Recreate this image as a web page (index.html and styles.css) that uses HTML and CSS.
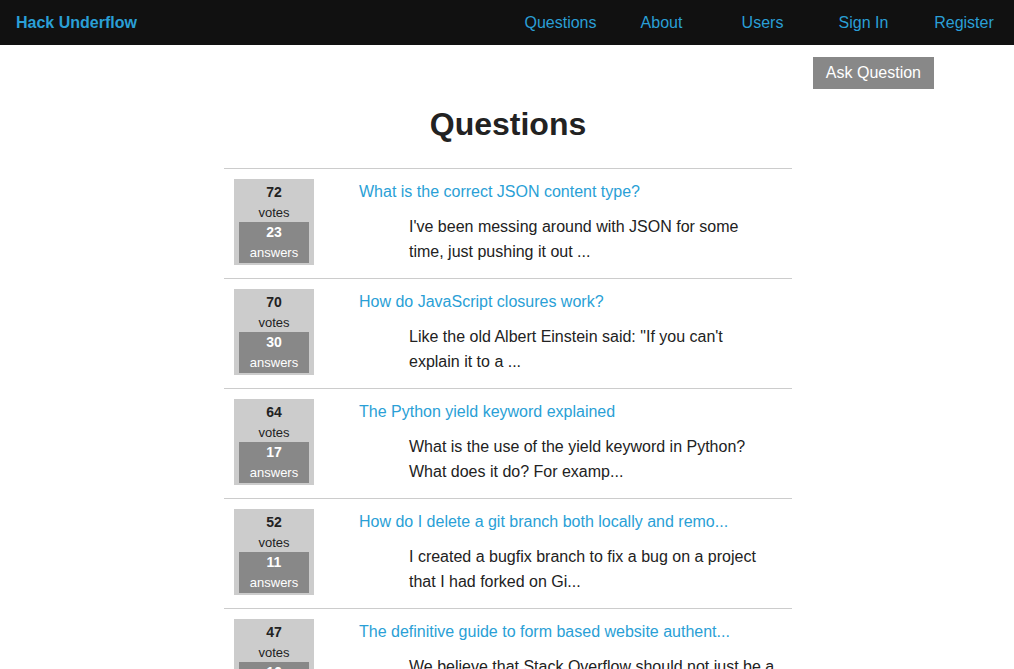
FILE: index.html
```html
<!DOCTYPE html>
<html lang="en">
<head>
<meta charset="utf-8">
<title>Hack Underflow</title>
<link rel="stylesheet" href="styles.css">
</head>
<body>
<nav class="navbar">
  <a class="brand" href="#">Hack Underflow</a>
  <ul class="nav-links">
    <li><a href="#">Questions</a></li>
    <li><a href="#">About</a></li>
    <li><a href="#">Users</a></li>
    <li><a href="#">Sign In</a></li>
    <li><a href="#">Register</a></li>
  </ul>
</nav>
<main class="page">
  <div class="actions">
    <a class="ask-btn" href="#">Ask Question</a>
  </div>
  <h1 class="page-title">Questions</h1>
  <ul class="question-list">
    <li class="question">
      <div class="stats">
        <div class="count">72</div>
        <div class="label">votes</div>
        <div class="answers">
          <div class="count">23</div>
          <div class="label">answers</div>
        </div>
      </div>
      <div class="summary">
        <a class="q-title" href="#">What is the correct JSON content type?</a>
        <p class="excerpt">I've been messing around with JSON for some time, just pushing it out ...</p>
      </div>
    </li>
    <li class="question">
      <div class="stats">
        <div class="count">70</div>
        <div class="label">votes</div>
        <div class="answers">
          <div class="count">30</div>
          <div class="label">answers</div>
        </div>
      </div>
      <div class="summary">
        <a class="q-title" href="#">How do JavaScript closures work?</a>
        <p class="excerpt">Like the old Albert Einstein said: "If you can't explain it to a ...</p>
      </div>
    </li>
    <li class="question">
      <div class="stats">
        <div class="count">64</div>
        <div class="label">votes</div>
        <div class="answers">
          <div class="count">17</div>
          <div class="label">answers</div>
        </div>
      </div>
      <div class="summary">
        <a class="q-title" href="#">The Python yield keyword explained</a>
        <p class="excerpt">What is the use of the yield keyword in Python? What does it do? For examp...</p>
      </div>
    </li>
    <li class="question">
      <div class="stats">
        <div class="count">52</div>
        <div class="label">votes</div>
        <div class="answers">
          <div class="count">11</div>
          <div class="label">answers</div>
        </div>
      </div>
      <div class="summary">
        <a class="q-title" href="#">How do I delete a git branch both locally and remo...</a>
        <p class="excerpt">I created a bugfix branch to fix a bug on a project that I had forked on Gi...</p>
      </div>
    </li>
    <li class="question">
      <div class="stats">
        <div class="count">47</div>
        <div class="label">votes</div>
        <div class="answers">
          <div class="count">16</div>
          <div class="label">answers</div>
        </div>
      </div>
      <div class="summary">
        <a class="q-title" href="#">The definitive guide to form based website authent...</a>
        <p class="excerpt">We believe that Stack Overflow should not just be a resource for very ...</p>
      </div>
    </li>
  </ul>
</main>
</body>
</html>
```
FILE: styles.css
```css
* { box-sizing: border-box; }

html, body {
  margin: 0;
  padding: 0;
  overflow: hidden;
}

body {
  font-family: "Liberation Sans", Arial, sans-serif;
  font-size: 16px;
  color: #222;
  background: #fff;
}

a { text-decoration: none; }

.navbar {
  height: 45px;
  background: #111;
  display: flex;
  align-items: center;
  justify-content: space-between;
  padding-left: 16px;
}

.brand {
  color: #2a9fd6;
  font-weight: bold;
  font-size: 16px;
  line-height: 20px;
}

.nav-links {
  list-style: none;
  margin: 0;
  padding: 0;
  display: flex;
}

.nav-links li {
  width: 101px;
  text-align: center;
}

.nav-links li:last-child {
  width: 100px;
}

.nav-links a {
  color: #2a9fd6;
  line-height: 20px;
}

.page {
  width: 100%;
  padding-left: 2px;
}

.actions {
  display: flex;
  justify-content: flex-end;
  padding-right: 80px;
  margin-top: 12px;
}

.ask-btn {
  display: block;
  background: #888;
  color: #fff;
  padding: 6px 13px;
  line-height: 20px;
  height: 32px;
  font-size: 16px;
}

.page-title {
  text-align: center;
  font-size: 32px;
  line-height: 36px;
  font-weight: bold;
  margin: 17px 0 26px;
  color: #222;
}

.question-list {
  list-style: none;
  margin: 0 auto;
  padding: 0;
  width: 568px;
}

.question {
  display: flex;
  border-top: 1px solid #ccc;
  padding: 10px 10px 12px;
  height: 110px;
}

.stats {
  width: 80px;
  height: 86px;
  flex: none;
  background: #ccc;
  text-align: center;
  padding-top: 3px;
}

.count {
  font-weight: bold;
  font-size: 14px;
  line-height: 20px;
}

.label {
  font-size: 13px;
  line-height: 20px;
  padding-top: 1px;
  margin-bottom: -1px;
}

.answers {
  margin: 0 5px;
  height: 41px;
  background: #888;
  color: #fff;
}

.summary {
  margin-left: 45px;
  flex: 1;
}

.q-title {
  display: block;
  color: #2a9fd6;
  line-height: 18px;
  margin-top: 4px;
}

.excerpt {
  margin: 13px 0 0 50px;
  width: 368px;
  line-height: 25px;
}
```
